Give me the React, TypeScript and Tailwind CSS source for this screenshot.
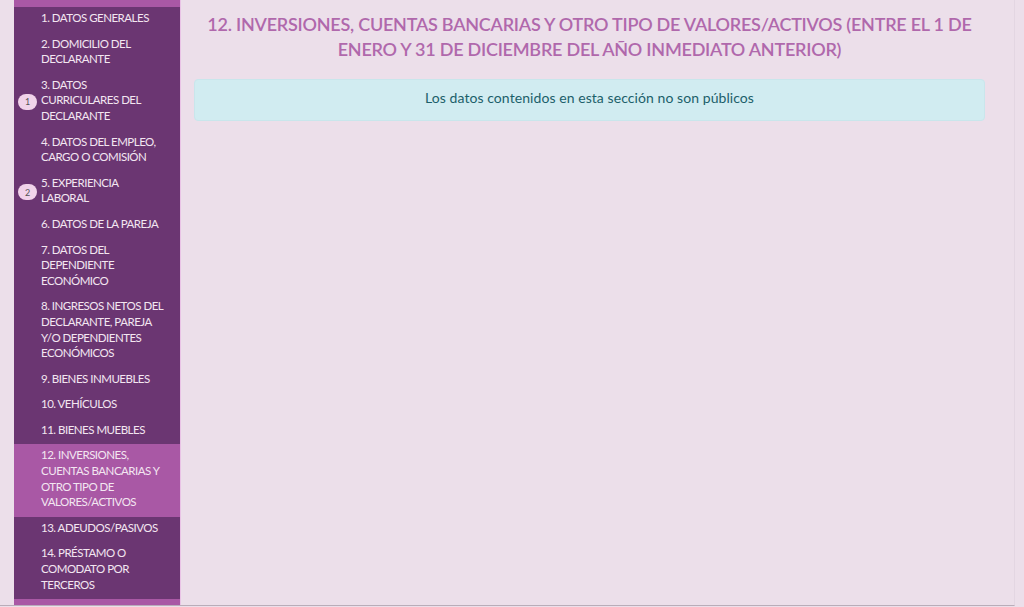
const ITEMS = [
  { label: "1. DATOS GENERALES" },
  { label: "2. DOMICILIO DEL DECLARANTE" },
  { label: "3. DATOS CURRICULARES DEL DECLARANTE", badge: "1" },
  { label: "4. DATOS DEL EMPLEO, CARGO O COMISIÓN" },
  { label: "5. EXPERIENCIA LABORAL", badge: "2" },
  { label: "6. DATOS DE LA PAREJA" },
  { label: "7. DATOS DEL DEPENDIENTE ECONÓMICO" },
  { label: "8. INGRESOS NETOS DEL DECLARANTE, PAREJA Y/O DEPENDIENTES ECONÓMICOS" },
  { label: "9. BIENES INMUEBLES" },
  { label: "10. VEHÍCULOS" },
  { label: "11. BIENES MUEBLES" },
  { label: "12. INVERSIONES, CUENTAS BANCARIAS Y OTRO TIPO DE VALORES/ACTIVOS", active: true },
  { label: "13. ADEUDOS/PASIVOS" },
  { label: "14. PRÉSTAMO O COMODATO POR TERCEROS" },
];

function SideItem({ label, badge, active }: { label: string; badge?: string; active?: boolean }) {
  return (
    <li className={`relative pl-[27px] pr-[14px] pt-[3px] pb-[7px] ${active ? "bg-[#a958a5]" : ""}`}>
      {badge && (
        <span className="absolute left-[4px] top-1/2 flex h-[16px] w-[19px] -translate-y-1/2 items-center justify-center rounded-full bg-[#f1d3ea] text-[9px] tracking-normal text-[#555]">
          {badge}
        </span>
      )}
      {label}
    </li>
  );
}

export default function App() {
  return (
    <div className="h-[607px] w-[1024px] overflow-hidden bg-[#ecdfea] font-['Lato','Noto_Sans',sans-serif]">
      <div className="flex h-[606px] w-[1015px] border-r border-b border-r-[#e3d6e2] border-b-[#b9adb9] pl-[14px]">
        <aside className="h-full w-[166px] shrink-0 bg-[#a958a5] pt-[7px] pb-[7px]">
          <ul className="bg-[#6b3672] text-[11.5px] leading-[15.6px] tracking-[-0.5px] text-[#f3e6f1]">
            {ITEMS.map((item) => (
              <SideItem key={item.label} {...item} />
            ))}
          </ul>
        </aside>
        <main className="min-w-0 flex-1 border-l border-l-[#e9c3e6] pl-[13px] pr-[29px]">
          <h1 className="pt-[12px] text-center text-[18px] leading-[25px] font-semibold tracking-[-0.24px] text-[#b068ac]">
            12. INVERSIONES, CUENTAS BANCARIAS Y OTRO TIPO DE VALORES/ACTIVOS (ENTRE EL 1 DE ENERO Y 31 DE DICIEMBRE DEL AÑO INMEDIATO ANTERIOR)
          </h1>
          <div className="mt-[17px] h-[42px] rounded border border-[#c9e6ec] bg-[#d1ecf1] pt-[8px] text-center text-[14px] leading-[20px] tracking-[0.07px] text-[#1c5f6a]">
            Los datos contenidos en esta sección no son públicos
          </div>
        </main>
      </div>
    </div>
  );
}
